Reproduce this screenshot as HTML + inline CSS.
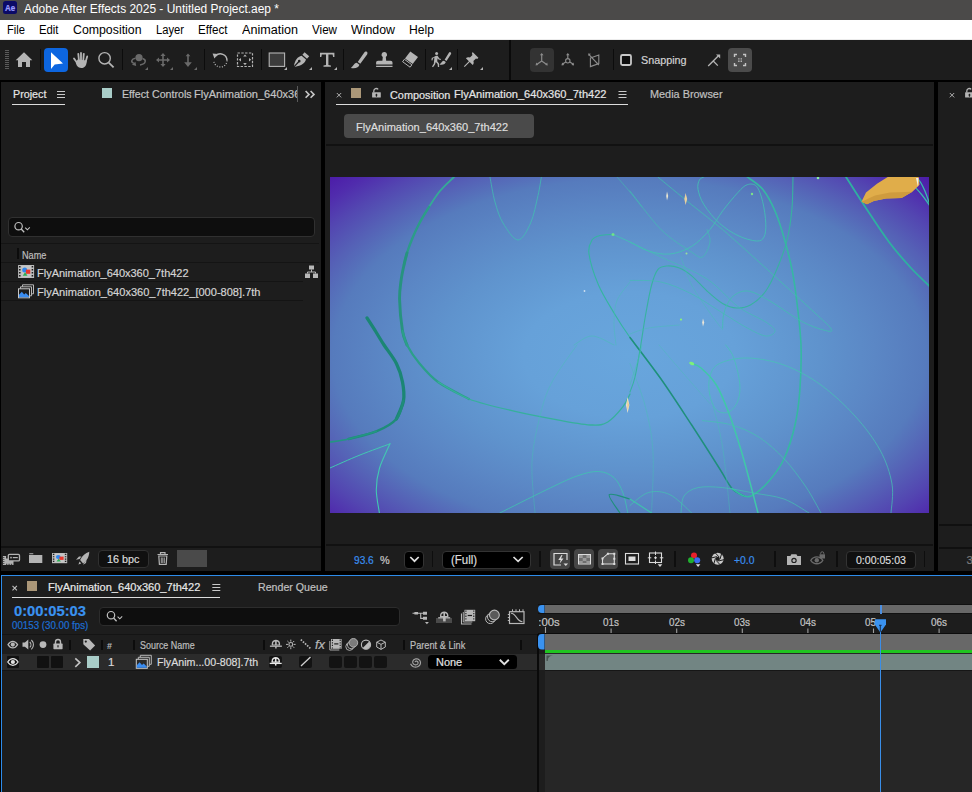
<!DOCTYPE html>
<html lang="en"><head><meta charset="utf-8"><title>Adobe After Effects 2025 - Untitled Project.aep *</title>
<style>
html,body{margin:0;padding:0;background:#000;}
body{width:972px;height:792px;overflow:hidden;position:relative;font-family:"Liberation Sans",sans-serif;}
#app{position:absolute;left:0;top:0;width:972px;height:792px;overflow:hidden;background:#000;}
.b{position:absolute;box-sizing:border-box;}
.t{position:absolute;white-space:nowrap;line-height:1.2;-webkit-text-stroke:0.2px currentColor;transform-origin:0 50%;display:block;}
svg{position:absolute;overflow:visible;}
.p{position:absolute;overflow:hidden;background:#1d1d1d;}
</style></head><body><div id="app">
<header id="titlebar">
<div class="b" style="left:0px;top:0px;width:972px;height:20px;background:#4b4a49;"></div>
<div class="b" style="left:3.3px;top:1px;width:13.5px;height:12.7px;background:#0b0a66;border-radius:2.500px;"></div>
<span class="t" style="left:4.70px;top:2.79px;font-size:8.5px;color:#9c9cff;font-weight:bold;transform:scaleX(0.9387);">Ae</span>
<span class="t" style="left:24.10px;top:2.43px;font-size:12px;color:#ffffff;transform:scaleX(0.9963);-webkit-text-stroke:0;">Adobe After Effects 2025 - Untitled Project.aep *</span>
</header>
<nav id="menubar">
<div class="b" style="left:0px;top:20px;width:972px;height:20px;background:#ffffff;"></div>
<div class="b" style="left:0px;top:39px;width:972px;height:1px;background:#ececec;"></div>
<span class="t" style="left:7.40px;top:22.83px;font-size:12px;color:#000000;transform:scaleX(0.9309);-webkit-text-stroke:0;">File</span>
<span class="t" style="left:39.40px;top:22.83px;font-size:12px;color:#000000;transform:scaleX(0.9430);-webkit-text-stroke:0;">Edit</span>
<span class="t" style="left:73.40px;top:22.83px;font-size:12px;color:#000000;transform:scaleX(1.0270);-webkit-text-stroke:0;">Composition</span>
<span class="t" style="left:156.40px;top:22.83px;font-size:12px;color:#000000;transform:scaleX(0.9328);-webkit-text-stroke:0;">Layer</span>
<span class="t" style="left:198.40px;top:22.83px;font-size:12px;color:#000000;transform:scaleX(0.9684);-webkit-text-stroke:0;">Effect</span>
<span class="t" style="left:242.40px;top:22.83px;font-size:12px;color:#000000;transform:scaleX(1.0494);-webkit-text-stroke:0;">Animation</span>
<span class="t" style="left:312.40px;top:22.83px;font-size:12px;color:#000000;transform:scaleX(0.9692);-webkit-text-stroke:0;">View</span>
<span class="t" style="left:351.40px;top:22.83px;font-size:12px;color:#000000;transform:scaleX(1.0309);-webkit-text-stroke:0;">Window</span>
<span class="t" style="left:409.40px;top:22.83px;font-size:12px;color:#000000;transform:scaleX(1.0129);-webkit-text-stroke:0;">Help</span>
</nav>
<section id="toolbar">
<div class="b" style="left:0px;top:40px;width:972px;height:40px;background:#1d1d1d;"></div>
<div class="b" style="left:5px;top:50px;width:4px;height:20px;background:repeating-linear-gradient(to bottom,#5a5a5a 0,#5a5a5a 1px,transparent 1px,transparent 2px);"></div>
<div class="b" style="left:39.5px;top:49px;width:1.5px;height:21px;background:#0c0c0c;"></div>
<div class="b" style="left:121.5px;top:49px;width:1.5px;height:21px;background:#0c0c0c;"></div>
<div class="b" style="left:203.5px;top:49px;width:1.5px;height:21px;background:#0c0c0c;"></div>
<div class="b" style="left:260.5px;top:49px;width:1.5px;height:21px;background:#0c0c0c;"></div>
<div class="b" style="left:342.5px;top:49px;width:1.5px;height:21px;background:#0c0c0c;"></div>
<div class="b" style="left:424.5px;top:49px;width:1.5px;height:21px;background:#0c0c0c;"></div>
<div class="b" style="left:456.5px;top:49px;width:1.5px;height:21px;background:#0c0c0c;"></div>
<div class="b" style="left:612.5px;top:49px;width:1.5px;height:21px;background:#0c0c0c;"></div>
<div class="b" style="left:509px;top:40px;width:2px;height:40px;background:#0a0a0a;"></div>
<div class="b" style="left:44px;top:48px;width:24px;height:24px;background:#0d66e0;border-radius:4px;"></div>
<div class="b" style="left:530px;top:48px;width:24px;height:24px;background:#333333;border-radius:4px;"></div>
<div class="b" style="left:728px;top:48px;width:24px;height:24px;background:#4b4b4b;border-radius:4px;"></div>
<svg width="972" height="40" viewBox="0 40 972 40" style="left:0;top:40px"><path d="M24 52.3 L32.3 60.3 H30 V67 H26 V62 H22 V67 H18 V60.3 H15.7 Z" fill="#b4b4b4"/><path d="M51 52.3 V69 L54.7 64.6 L63 63.4 Z" fill="#fff"/><path d="M78.300 54 L79 61 M81 53 V61 M83.800 53.800 L83.200 61 M87.200 56.400 L85.600 62 M74 58.400 L77.600 63.600" stroke="#b4b4b4" stroke-width="1.800" stroke-linecap="round" fill="none"/><path d="M77.600 59.600 L86.600 60.400 C87 64.600 85 68 81.200 68 C78 68 76.200 65.600 75.800 62.600 Z" fill="#b4b4b4"/><circle cx="104.6" cy="58.3" r="5.7" fill="none" stroke="#b4b4b4" stroke-width="1.4"/><path d="M108.7 62.6 L113.6 67.4" stroke="#b4b4b4" stroke-width="1.8" fill="none"/><path d="M148 67 V70 H145 Z" fill="#6a6a6a"/><path d="M173 67 V70 H170 Z" fill="#6a6a6a"/><path d="M197 67 V70 H194 Z" fill="#6a6a6a"/><path d="M287 67 V70 H284 Z" fill="#b4b4b4"/><path d="M312 67 V70 H309 Z" fill="#b4b4b4"/><path d="M337 67 V70 H334 Z" fill="#b4b4b4"/><path d="M452 67 V70 H449 Z" fill="#b4b4b4"/><path d="M483 67 V70 H480 Z" fill="#b4b4b4"/><circle cx="139" cy="57.6" r="3.6" fill="#6a6a6a"/><path d="M135.5 58.2 c-4 .6-5.2 3.6-1.6 5.2 M142.5 58.4 c4 1 4 5.6-2.5 6.6" stroke="#6a6a6a" stroke-width="1.5" fill="none"/><path d="M132 64.8 l3.4-3 l.8 4.2z" fill="#6a6a6a"/><path d="M163 53 l2.6 3 h-1.8 v3.2 h3.2 v-1.8 l3 2.6 l-3 2.6 v-1.8 h-3.2 v3.2 h1.8 l-2.6 3 l-2.6-3 h1.8 v-3.2 h-3.2 v1.8 l-3-2.6 l3-2.6 v1.8 h3.2 v-3.2 h-1.8z" fill="#6a6a6a"/><path d="M188 53.6 l2.4 2.6 h-1.6 v6 h3 l-3.8 4.8 l-3.8-4.8 h3 v-6 h-1.6z" fill="#6a6a6a"/><path d="M215.6 56 A6.6 6.6 0 0 1 227 60.4" stroke="#b4b4b4" stroke-width="1.5" fill="none"/><path d="M212.6 53.6 l5.4 .4 l-3.6 4.4z" fill="#b4b4b4"/><path d="M227 60.4 A6.6 6.6 0 0 1 213.8 60.4" stroke="#b4b4b4" stroke-width="1.3" stroke-dasharray="1 1.6" fill="none"/><rect x="237.5" y="53" width="15" height="13.5" fill="none" stroke="#b4b4b4" stroke-width="1.2" stroke-dasharray="2.4 1.4"/><path d="M245 54.4 l1.8 2.2 h-3.6z M245 65.2 l1.8-2.2 h-3.6z M238.8 59.8 l2.2-1.8 v3.6z M251.2 59.8 l-2.2-1.8 v3.6z" fill="#b4b4b4"/><rect x="269.2" y="53" width="15.4" height="13.4" fill="#3c3c3c" stroke="#b4b4b4" stroke-width="1.1"/><path d="M304.6 52.2 l4.6 4 l-2.2 2.6 l-4.6-4z M301.6 55.8 l4.4 3.8 c-1 3.6-4 6-11.4 7.4 l4.4-4.6 a1.3 1.3 0 1 0 -1-.9 l-4 4.6 c1-6.400 3.6-9.200 7.600-10.300z" fill="#b4b4b4"/><path d="M320 52.8 h14.400 v4.2 h-1.300 l-.5-2.500 h-4.200 v10.600 l2.500 .5 v1.200 h-7.400 v-1.200 l2.500-.5 v-10.600 h-4.200 l-.5 2.500 h-1.300z" fill="#b4b4b4"/><path d="M366.4 51.600 c1.200 .6 1.400 1.700 .7 2.800 l-6.800 9.400 l-2.600-1.900 l6.600-9.500 c.6-.9 1.400-1.200 2.100-.8z M356.800 62.800 l2.600 1.900 c-.6 2.700-3.800 4.200-8.600 3.200 c2.600-1.400 2.800-4.600 6-5.100z" fill="#b4b4b4"/><path d="M384.300 52 a2.700 2.700 0 0 1 1.500 5 l.4 3.800 h4.300 c1.300 0 2 .7 2 2 v1.600 h-16.400 v-1.600 c0-1.300 .7-2 2-2 h4.300 l.4-3.800 a2.700 2.700 0 0 1 1.500-5z M376.100 65.700 h16.400 v1.300 h-16.400z" fill="#b4b4b4"/><path d="M410.300 51.400 l7.700 5.600 l-5.300 7.000 l-7.700-5.600z" fill="#b4b4b4"/><path d="M404.400 59.300 l7.500 5.500 l-1.800 2.400 l-7.500-5.500z" fill="none" stroke="#b4b4b4" stroke-width="1"/><circle cx="436.600" cy="53.600" r="1.500" fill="#b4b4b4"/><path d="M433 57.400 l3-1.600 h1.600 l1.800 2.600 l1.600 .6 l-.4 1 l-2-.6 l-1-1.200 l-.4 3 l1.800 2.400 l.2 3.400 h-1.300 l-.3-3 l-1.800-2 l-.8 2.400 l-2 2.800 l-1-.8 l1.800-2.600 l.6-6.200 l-1.400 .8 l-.6 2 l-1-.2 l.4-2.400z" fill="#b4b4b4"/><path d="M450.400 52.200 c.9 .5 1 1.300 .5 2.100 l-4.400 6.800 l-1.900-1.400 l4.300-6.900 c.4-.7 1-.9 1.500-.6z M443.900 60.700 l1.900 1.400 c-.4 2-2.800 3.100-6.400 2.400 c1.900-1 2.100-3.400 4.500-3.800z" fill="#b4b4b4"/><path d="M472.600 52 l5.800 5.800 l-1.200 1.200 l-1.200-.6 l-2.600 2.600 c.6 1.600 .3 3-.7 4 l-3-3 l-5 5 l-.8-.800 l5-5 l-3-3 c1-1 2.400-1.300 4-.7 l2.600-2.600 l-.6-1.200z" fill="#b4b4b4"/><path d="M541.700 54.200 V61 M541.700 61 l-5 3.600 M541.700 61 l5 3.600" stroke="#8c8c8c" stroke-width="1.200" fill="none"/><path d="M541.700 53 l1.800 2.200 h-3.600z M535.600 65.400 l.6-2.800 l2 2.400z M547.800 65.400 l-.6-2.800 l-2 2.400z" fill="#8c8c8c"/><path d="M567.800 54.200 V58.600 M565.800 62 l-4 2.600 M569.800 62 l4 2.600" stroke="#8c8c8c" stroke-width="1.200" fill="none"/><circle cx="567.800" cy="60.800" r="2.200" fill="none" stroke="#8c8c8c" stroke-width="1.100"/><path d="M567.800 53 l1.800 2.200 h-3.600z M561.600 65.400 l.6-2.800 l2 2.400z M574 65.400 l-.6-2.800 l-2 2.400z" fill="#8c8c8c"/><path d="M590.400 58 l8.400-3 v8.600 l-8.400 3z M589 54.600 l9.800 10.400" stroke="#8c8c8c" stroke-width="1.100" fill="none"/><path d="M588 53.400 l3 .4 l-2.400 2.200z" fill="#8c8c8c"/><rect x="621" y="55" width="10" height="10" rx="1.500" fill="#0e0e0e" stroke="#c8c8c8" stroke-width="1.800"/><path d="M708.200 66 l5-5 l4.600 4.600 M713.200 61 l5-5" stroke="#b4b4b4" stroke-width="1.300" fill="none"/><path d="M720.200 54.400 v4.200 l-4.200-4.200z" fill="#b4b4b4"/><path d="M734.500 57 v-2.500 h2.500 M743 54.500 h2.500 v2.500 M745.500 63 v2.500 h-2.500 M737 65.500 h-2.500 v-2.500" stroke="#c4c4c4" stroke-width="1.400" fill="none"/><path d="M738.200 58.200 h1.300 v1.300 h-1.300z M740.600 58.200 h1.300 v1.300 h-1.300z M738.200 60.600 h1.300 v1.300 h-1.300z M740.600 60.600 h1.300 v1.300 h-1.300z" fill="#c4c4c4"/></svg>
<span class="t" style="left:641.30px;top:54.00px;font-size:11.5px;color:#d2d2d2;transform:scaleX(0.9382);">Snapping</span>
</section>
<section id="project-panel">
<div class="b" style="left:1px;top:82px;width:320px;height:489px;background:#1d1d1d;"></div>
<span class="t" style="left:13.40px;top:87.60px;font-size:11.5px;color:#e6e6e6;transform:scaleX(0.9331);">Project</span>
<div class="b" style="left:12px;top:104px;width:53px;height:1.4px;background:#dcdcdc;"></div>
<div class="b" style="left:102px;top:88px;width:10px;height:10px;background:#a9cdc8;"></div>
<div class="b" style="left:120px;top:84px;width:177.400px;height:20px;overflow:hidden;"><span class="t" style="left:1.50px;top:4.30px;font-size:11.5px;color:#c4c4c4;transform:scaleX(0.9254);">Effect Controls</span><span class="t" style="left:74.30px;top:3.80px;font-size:11.5px;color:#c4c4c4;transform:scaleX(0.9618);">FlyAnimation_640x360_7th422</span></div>
<div class="b" style="left:297.4px;top:86px;width:1px;height:15.5px;background:#5a5a5a;"></div>
<div class="b" style="left:8px;top:217px;width:307px;height:19.5px;background:#0e0e0e;border:1px solid #303030;border-radius:4px;"></div>
<div class="b" style="left:1px;top:243px;width:318px;height:1px;background:#141414;"></div>
<div class="b" style="left:16.5px;top:248px;width:2px;height:11px;background:#0c0c0c;"></div>
<span class="t" style="left:22.40px;top:248.73px;font-size:10.5px;color:#bdbdbd;transform:scaleX(0.8711);">Name</span>
<div class="b" style="left:1px;top:262px;width:318px;height:1px;background:#141414;"></div>
<div class="b" style="left:1px;top:281px;width:302px;height:1px;background:#141414;"></div>
<div class="b" style="left:1px;top:300px;width:302px;height:1px;background:#141414;"></div>
<span class="t" style="left:36.80px;top:267.00px;font-size:11.5px;color:#d4d4d4;transform:scaleX(0.9561);">FlyAnimation_640x360_7th422</span>
<span class="t" style="left:36.80px;top:286.00px;font-size:11.5px;color:#d4d4d4;transform:scaleX(0.9603);">FlyAnimation_640x360_7th422_[000-808].7th</span>
<div class="b" style="left:1px;top:546px;width:320px;height:1.5px;background:#111;"></div>
<div class="b" style="left:98.2px;top:550.2px;width:50.6px;height:17.6px;background:#101010;border:1px solid #303030;border-radius:4px;"></div>
<span class="t" style="left:107.30px;top:553.20px;font-size:11.5px;color:#dcdcdc;transform:scaleX(0.9383);">16 bpc</span>
<div class="b" style="left:177px;top:549.7px;width:30px;height:17px;background:#4a4a4a;"></div>
<svg width="321" height="489" viewBox="0 82 321 489" style="left:0;top:82px"><path d="M57 91.500 h8 M57 94.500 h8 M57 97.500 h8" stroke="#c8c8c8" stroke-width="1"/><path d="M305.600 91 l3.400 3.400 l-3.400 3.400 M310.600 91 l3.400 3.400 l-3.400 3.400" stroke="#c8c8c8" stroke-width="1.600" fill="none"/><circle cx="18.600" cy="226.200" r="3.700" fill="none" stroke="#c0c0c0" stroke-width="1.200"/><path d="M21.200 229 l3 3.200" stroke="#c0c0c0" stroke-width="1.300"/><path d="M25.200 227.600 l2.200 2.200 l2.400-2.400" stroke="#c0c0c0" stroke-width="1.100" fill="none"/><g transform="translate(18.1 265) scale(1.000 1.000)"><rect x="0" y="0" width="16" height="13" fill="#bdbdbd"/><path d="M1.700 1 v11.500 M14.300 1 v11.500" stroke="#1d1d1d" stroke-width="1.500" stroke-dasharray="1.500 1.500"/><rect x="3.400" y="1" width="9.200" height="11" fill="#c6c6c6"/><circle cx="6.600" cy="5" r="2.500" fill="#2f86ee"/><rect x="7.800" y="4.600" width="4.400" height="4.200" fill="#e8382e"/><path d="M4.600 10.800 l2.400-3.600 l2.400 3.600z" fill="#2cae54"/></g><g transform="translate(18 284.3)"><path d="M4.500 2.500 v-2 h11 v9 h-2" fill="none" stroke="#b8b8b8" stroke-width="1"/><path d="M2.500 4.500 v-2 h11 v9 h-2" fill="none" stroke="#b8b8b8" stroke-width="1"/><rect x="0.500" y="4.500" width="11" height="9" fill="#1d1d1d" stroke="#c8c8c8" stroke-width="1"/><path d="M1 13 v-2.500 l2.800-3 l2.400 2.600 l1.600-1.400 l3.200 3 v1.300z" fill="#3a8cf0"/></g><path d="M309 265.500 h5 v4 h-5z M305 273.500 h5 v4.500 h-5z M313 273.500 h5 v4.500 h-5z" fill="#b8b8b8"/><path d="M311.500 269.500 v2.500 M307.500 273.500 v-1.500 h8 v1.500" stroke="#b8b8b8" stroke-width="1" fill="none"/><path d="M2.900 556 h3.200 v2.400 h7.400 v6.600 h-10.600z" fill="#b4b4b4"/><path d="M3.800 557 v7" stroke="#1d1d1d" stroke-width="0.900" stroke-dasharray="1 1"/><path d="M6 564.300 h7" stroke="#1d1d1d" stroke-width="0.900" stroke-dasharray="1.400 1"/><rect x="8.300" y="554.300" width="11.200" height="6.600" rx="1.200" fill="#1d1d1d" stroke="#b4b4b4" stroke-width="1.300"/><rect x="10.200" y="556.800" width="1.600" height="1.600" fill="#b4b4b4"/><rect x="12.800" y="557" width="5" height="1.200" fill="#b4b4b4"/><path d="M29.300 553.300 h4 v1 h-4z M29 555 h13.300 v8 h-13.300z" fill="#b4b4b4"/><g transform="translate(52 553) scale(0.950 0.785)"><rect x="0" y="0" width="16" height="13" fill="#bdbdbd"/><path d="M1.700 1 v11.500 M14.300 1 v11.500" stroke="#1d1d1d" stroke-width="1.500" stroke-dasharray="1.500 1.500"/><rect x="3.400" y="1" width="9.200" height="11" fill="#c6c6c6"/><circle cx="6.600" cy="5" r="2.500" fill="#2f86ee"/><rect x="7.800" y="4.600" width="4.400" height="4.200" fill="#e8382e"/><path d="M4.600 10.800 l2.400-3.600 l2.400 3.600z" fill="#2cae54"/></g><path d="M89.300 551.800 c-.2 5.600-2.600 9.200-6.200 11.600 l-3-3.400 c2.200-4.200 5.200-7 9.200-8.200z M79.600 559 l-3.600 .8 l3-3.400 h2.400z M83.600 563.800 l-.4 .9 l2.800-1.800 l.6-3z M79.600 561.600 l1.600 1.800 l-2.800 1z" fill="#b4b4b4"/><path d="M157.500 554.500 h10.500 M160.500 554 v-1.300 h4.500 v1.300" stroke="#b4b4b4" stroke-width="1.200" fill="none"/><path d="M158.800 556 h8 l-.6 8.400 h-6.800z" fill="none" stroke="#b4b4b4" stroke-width="1.200"/><path d="M161.300 557.500 v5.500 M162.800 557.500 v5.500 M164.300 557.500 v5.500" stroke="#b4b4b4" stroke-width="0.900"/></svg>
</section>
<section id="comp-panel">
<div class="b" style="left:325px;top:82px;width:609px;height:489px;background:#1d1d1d;"></div>
<div class="b" style="left:938px;top:82px;width:34px;height:489px;background:#1d1d1d;"></div>
<div class="b" style="left:351px;top:88px;width:10px;height:10px;background:#ab9778;"></div>
<span class="t" style="left:389.70px;top:88.60px;font-size:11.5px;color:#e6e6e6;transform:scaleX(0.9449);">Composition</span>
<span class="t" style="left:453.60px;top:88.20px;font-size:11.5px;color:#e6e6e6;transform:scaleX(0.9618);">FlyAnimation_640x360_7th422</span>
<div class="b" style="left:336px;top:104px;width:291.5px;height:1.4px;background:#dcdcdc;"></div>
<span class="t" style="left:649.60px;top:88.20px;font-size:11.5px;color:#c0c0c0;transform:scaleX(0.9453);">Media Browser</span>
<div class="b" style="left:939px;top:524px;width:33px;height:2px;background:#101010;"></div>
<div class="b" style="left:939px;top:547px;width:33px;height:2px;background:#101010;"></div>
<span class="t" style="left:966.60px;top:553.80px;font-size:11.5px;color:#7a7a7a;">3</span>
<div class="b" style="left:344px;top:114px;width:190px;height:24px;background:#4a4a4a;border-radius:4px;"></div>
<span class="t" style="left:355.80px;top:121.00px;font-size:11.5px;color:#dedede;transform:scaleX(0.9592);">FlyAnimation_640x360_7th422</span>
<div class="b" style="left:326px;top:144px;width:607px;height:2px;background:#111;"></div>
<div class="b" id="viewer" style="left:330px;top:177px;width:599px;height:336px;overflow:hidden;background:radial-gradient(ellipse farthest-corner at 50% 53%,#68a6dd 0%,#66a1d9 25%,#5f93cd 45%,#5b87c5 58%,#567bbd 70%,#5560b6 79%,#5346b1 87%,#502cad 94%,#4c1ca8 100%);">
<svg width="599" height="336" viewBox="0 0 599 336" style="left:0;top:0" fill="none" stroke-linecap="round"><path d="M124.0 0.0C121.7 2.3 114.2 9.0 110.0 14.0C105.8 19.0 102.4 24.7 99.0 30.0C95.6 35.3 91.1 43.3 89.5 46.0" stroke="#35aa96" stroke-width="1.9" opacity="1.0"/>
<path d="M99.0 30.0C97.4 32.7 92.2 40.8 89.5 46.0C86.8 51.2 84.6 56.0 82.5 61.0C80.4 66.0 78.4 71.5 77.0 76.0C75.6 80.5 74.5 86.0 74.0 88.0" stroke="#2c9c88" stroke-width="2.4" opacity="1.0"/>
<path d="M77.0 76.0C76.5 78.0 75.0 83.3 74.0 88.0C73.0 92.7 71.7 98.2 71.0 104.0C70.3 109.8 69.3 114.7 69.6 123.0C69.8 131.3 71.3 146.5 72.5 154.0C73.7 161.5 76.2 165.7 77.0 168.0" stroke="#27937f" stroke-width="2.9" opacity="1.0"/>
<path d="M72.5 154.0C73.2 156.3 74.2 162.6 77.0 168.0C79.8 173.4 84.3 180.3 89.5 186.5C94.7 192.7 99.8 199.1 108.0 205.0C116.2 210.9 133.8 219.2 139.0 222.0" stroke="#2c9f8a" stroke-width="2.2" opacity="1.0"/>
<path d="M108.0 205.0C113.2 207.8 126.2 217.1 139.0 222.0C151.8 226.9 169.6 230.8 185.0 234.4C200.4 238.0 218.6 241.3 231.5 243.6C244.4 245.9 254.6 247.8 262.3 248.0C270.0 248.2 272.7 248.1 277.8 245.0C282.9 241.9 289.3 234.4 293.0 229.7C296.7 225.0 298.8 219.1 300.0 217.0" stroke="#36b09c" stroke-width="1.3" opacity="1.0"/>
<path d="M160.0 0.0C160.8 4.2 162.8 17.3 165.0 25.0C167.2 32.7 169.2 39.7 173.0 46.0C176.8 52.3 183.4 63.0 188.0 63.0C192.6 63.0 197.3 53.4 200.6 46.0C203.9 38.6 206.2 26.2 208.0 18.5C209.8 10.8 210.8 3.1 211.4 0.0" stroke="#40c0b0" stroke-width="0.9" opacity="0.85"/>
<path d="M37.0 141.0C38.5 143.3 43.2 150.5 46.0 155.0C48.8 159.5 50.6 162.8 54.0 168.0C57.4 173.2 63.3 180.3 66.4 186.5C69.5 192.7 71.3 198.8 72.5 205.0C73.7 211.2 74.5 217.4 73.5 223.6C72.5 229.8 67.6 238.9 66.4 242.0" stroke="#1b8674" stroke-width="3.3" opacity="1.0"/>
<path d="M73.5 223.6C72.3 226.7 70.9 236.9 66.4 242.0C61.9 247.1 54.3 251.1 46.3 254.4C38.3 257.7 23.1 260.7 18.5 262.0" stroke="#1f8c79" stroke-width="2.5" opacity="1.0"/>
<path d="M46.3 254.4C41.7 255.7 26.2 260.2 18.5 262.0C10.8 263.8 3.1 264.5 0.0 265.0" stroke="#239682" stroke-width="1.7" opacity="1.0"/>
<path d="M283.0 57.4C280.8 57.6 273.5 57.6 270.0 58.5C266.5 59.4 263.8 59.9 262.0 63.0C260.2 66.1 257.9 69.5 259.0 77.0C260.1 84.5 264.3 98.2 268.5 108.0C272.7 117.8 278.8 127.2 284.0 136.0C289.2 144.8 292.2 149.5 300.0 160.5C307.8 171.5 325.8 195.1 331.0 202.0" stroke="#35b5a0" stroke-width="1.1" opacity="1.0"/>
<path d="M300.0 160.5C305.2 167.4 320.7 187.4 331.0 202.0C341.3 216.6 351.9 233.1 361.7 248.0C371.4 262.9 382.8 280.9 389.5 291.5C396.2 302.1 397.9 306.9 402.0 311.5C406.1 316.1 412.0 317.8 414.0 319.0" stroke="#1f8f7c" stroke-width="1.5" opacity="1.0"/>
<path d="M402.0 311.5C404.0 312.8 410.4 318.0 414.0 319.0C417.6 320.0 419.3 320.2 423.5 317.7C427.7 315.2 433.9 309.9 439.0 304.0C444.1 298.1 449.7 291.3 454.0 282.0C458.3 272.7 462.4 259.3 465.0 248.0C467.6 236.7 468.8 227.3 469.8 214.0C470.8 200.7 471.5 183.1 471.0 168.0C470.5 152.9 468.2 136.1 466.7 123.5C465.2 110.9 464.1 102.9 462.0 92.6C459.9 82.3 457.1 71.5 454.3 61.7C451.5 51.9 448.6 42.2 445.0 34.0C441.4 25.8 437.3 18.0 432.7 12.3C428.1 6.6 419.9 2.1 417.3 0.0" stroke="#36b8a2" stroke-width="1.6" opacity="1.0"/>
<path d="M463.0 0.0C462.8 5.2 462.9 20.7 462.0 31.0C461.1 41.3 459.7 52.0 457.4 61.7C455.1 71.5 451.6 80.8 448.0 89.5C444.4 98.2 440.4 107.6 435.8 114.0C431.2 120.4 425.3 125.2 420.4 128.0C415.5 130.8 411.1 131.2 406.5 131.0C401.9 130.8 397.5 129.3 392.6 126.5C387.7 123.7 382.1 118.6 377.0 114.0C371.9 109.4 366.3 102.6 361.7 98.8C357.1 95.0 353.5 92.6 349.4 91.0C345.3 89.4 340.6 88.7 337.0 89.0C333.4 89.3 330.4 89.4 327.8 92.6C325.2 95.8 323.7 100.3 321.6 108.0C319.5 115.7 317.2 129.0 315.4 139.0C313.6 149.0 312.5 157.8 310.8 168.0C309.1 178.2 306.8 192.2 305.0 200.0C303.2 207.8 300.8 212.5 300.0 215.0" stroke="#38b2a0" stroke-width="1.1" opacity="1.0"/>
<path d="M283.0 57.4C285.8 58.7 294.1 62.2 300.0 65.0C305.9 67.8 311.8 72.0 318.5 74.0C325.2 76.0 332.8 77.8 340.0 77.0C347.2 76.2 355.0 73.5 361.7 69.4C368.4 65.3 374.9 58.4 380.0 52.5C385.1 46.6 387.9 40.2 392.6 34.0C397.3 27.8 403.9 19.8 408.0 15.4C412.1 11.0 414.2 8.7 417.3 7.7C420.4 6.7 423.9 6.5 426.5 9.3C429.1 12.1 431.1 18.5 432.7 24.7C434.2 30.9 435.6 40.4 435.8 46.3C436.0 52.2 435.6 57.0 434.0 60.0C432.4 63.0 430.8 64.2 426.5 64.0C422.2 63.8 414.2 61.6 408.0 58.6C401.8 55.6 395.2 51.4 389.5 46.3C383.8 41.2 377.6 33.5 374.0 27.8C370.4 22.1 368.8 16.4 368.0 12.3C367.2 8.2 368.4 5.1 369.4 3.0C370.4 0.9 373.2 0.5 374.0 0.0" stroke="#42c4b2" stroke-width="0.9" opacity="0.9"/>
<path d="M327.8 0.0C333.4 4.6 350.9 19.1 361.7 27.8C372.5 36.5 382.3 43.8 392.6 52.5C402.9 61.2 413.2 70.8 423.5 80.0C433.8 89.2 444.1 98.7 454.3 108.0C464.6 117.3 477.3 128.8 485.0 136.0C492.7 143.2 498.5 148.0 500.6 151.0C502.7 154.0 502.1 155.0 497.5 154.0C492.9 153.0 482.6 150.1 472.8 145.0C463.1 139.9 448.2 128.7 439.0 123.5C429.8 118.3 423.5 114.5 417.3 114.0C411.1 113.5 405.7 116.7 401.8 120.4C397.9 124.1 395.5 130.9 394.0 136.0C392.5 141.1 392.8 148.5 392.6 151.0" stroke="#40c0ae" stroke-width="0.9" opacity="0.85"/>
<path d="M300.0 14.0C305.2 20.4 321.0 42.5 331.0 52.5C341.0 62.5 353.1 69.4 360.0 74.0C366.9 78.6 369.2 81.5 372.5 80.0C375.8 78.5 379.2 69.6 380.0 65.0C380.8 60.4 377.5 54.6 377.0 52.5" stroke="#40c0ae" stroke-width="0.8" opacity="0.8"/>
<path d="M300.0 65.0C305.2 67.5 318.2 73.8 331.0 80.0C343.8 86.2 364.2 93.7 377.0 102.0C389.8 110.3 398.2 122.4 408.0 129.6C417.8 136.8 429.6 140.9 435.8 145.0C442.0 149.1 445.0 151.7 445.0 154.0C445.0 156.3 440.4 159.5 435.8 159.0C431.2 158.5 424.5 154.8 417.3 151.0C410.1 147.2 401.9 141.7 392.6 136.0C383.3 130.3 372.0 122.2 361.7 117.0C351.4 111.8 341.3 107.3 331.0 105.0C320.7 102.7 305.2 103.7 300.0 103.4" stroke="#40c0ae" stroke-width="0.8" opacity="0.8"/>
<path d="M351.0 80.0C352.8 84.7 356.9 98.7 361.7 108.0C366.5 117.3 374.9 128.5 380.0 136.0C385.1 143.5 390.5 150.0 392.6 152.8" stroke="#44c2b0" stroke-width="0.7" opacity="0.6"/>
<path d="M300.0 157.0C303.1 156.0 310.3 152.5 318.5 151.0C326.7 149.5 344.2 148.5 349.4 148.0" stroke="#44c2b0" stroke-width="0.7" opacity="0.6"/>
<path d="M516.0 0.0C519.1 4.8 527.4 18.2 534.6 29.0C541.8 39.8 551.3 54.7 559.0 65.0C566.7 75.3 574.2 83.6 581.0 91.0C587.8 98.4 596.8 106.5 600.0 109.6" stroke="#2fb0a0" stroke-width="1.8" opacity="1.0"/>
<path d="M559.0 6.0C561.7 5.5 570.3 3.8 575.0 3.0C579.7 2.2 583.8 0.0 587.0 1.5C590.2 3.0 591.8 7.6 594.0 12.0C596.2 16.4 599.0 25.3 600.0 28.0" stroke="#38bcae" stroke-width="1.3" opacity="1.0"/>
<path d="M584.0 9.0C585.3 10.5 589.3 14.7 592.0 18.0C594.7 21.3 598.7 27.2 600.0 29.0" stroke="#38bcae" stroke-width="1.2" opacity="1.0"/>
<path d="M287.0 0.0C289.2 2.5 295.8 10.0 300.0 15.0C304.2 20.0 310.0 27.5 312.0 30.0" stroke="#40c0ae" stroke-width="0.8" opacity="0.7"/>
<path d="M300.0 105.0C297.8 108.1 289.7 116.8 287.0 123.5C284.3 130.2 284.2 137.6 284.0 145.0C283.8 152.4 285.7 164.2 286.0 168.0" stroke="#44c2b0" stroke-width="0.7" opacity="0.6"/>
<path d="M244.0 168.0C247.0 166.5 255.3 159.0 262.0 159.0C268.7 159.0 280.3 166.5 284.0 168.0" stroke="#44c2b0" stroke-width="0.7" opacity="0.7"/>
<path d="M0.0 291.0C5.0 288.8 20.0 282.0 30.0 278.0C40.0 274.0 55.0 268.7 60.0 266.8" stroke="#42c8b2" stroke-width="1.0" opacity="1.0"/>
<path d="M60.0 266.8C58.2 270.9 51.7 283.8 49.4 291.5C47.1 299.2 46.3 305.6 46.3 313.0C46.3 320.4 48.9 332.2 49.4 336.0" stroke="#42c8b2" stroke-width="1.1" opacity="1.0"/>
<path d="M247.0 168.0C242.8 174.2 228.2 193.2 222.0 205.0C215.8 216.8 213.3 225.7 210.0 239.0C206.7 252.3 202.8 268.8 202.0 285.0C201.2 301.2 204.5 327.5 205.0 336.0" stroke="#44c2b0" stroke-width="0.7" opacity="0.6"/>
<path d="M169.8 336.0C177.5 332.2 203.1 319.2 216.0 313.0C228.9 306.8 238.2 302.1 247.0 299.0C255.8 295.9 262.3 294.2 268.5 294.5C274.7 294.8 279.9 297.1 284.0 300.7C288.1 304.3 290.7 310.1 293.0 316.0C295.3 321.9 297.0 332.7 297.8 336.0" stroke="#40c4b0" stroke-width="0.9" opacity="0.9"/>
<path d="M290.0 336.0C288.2 332.9 277.6 320.0 279.3 317.7C281.0 315.4 296.6 321.3 300.0 322.0" stroke="#1f8f7c" stroke-width="1.2" opacity="1.0"/>
<path d="M361.7 186.5C363.2 187.2 366.9 187.4 371.0 191.0C375.1 194.6 381.8 200.5 386.4 208.0C391.0 215.5 394.7 225.2 398.8 236.0C402.9 246.8 407.1 260.2 411.0 273.0C414.9 285.8 419.2 302.5 422.0 313.0C424.8 323.5 427.0 332.2 428.0 336.0" stroke="#40c8a8" stroke-width="1.5" opacity="1.0"/>
<path d="M395.7 168.0C397.0 170.0 401.1 173.8 403.4 180.0C405.7 186.2 408.8 197.8 409.6 205.0C410.4 212.2 409.8 218.5 408.0 223.5C406.2 228.5 402.4 233.4 398.8 235.0C395.2 236.6 389.6 236.0 386.4 233.0C383.2 230.0 380.7 222.7 379.6 217.0C378.5 211.3 378.4 204.1 380.0 199.0C381.6 193.9 383.3 189.5 389.5 186.5C395.7 183.5 406.2 180.8 417.0 181.0C427.8 181.2 441.7 183.5 454.0 188.0C466.3 192.5 479.2 199.5 491.0 208.0C502.8 216.5 515.2 228.2 525.0 239.0C534.8 249.8 543.8 261.7 550.0 273.0C556.2 284.3 560.2 296.5 562.0 307.0C563.8 317.5 561.2 331.2 561.0 336.0" stroke="#46c4b2" stroke-width="0.9" opacity="0.8"/>
<path d="M372.5 243.6C377.4 244.3 392.5 245.2 402.0 248.0C411.5 250.8 420.9 254.9 429.6 260.6C438.3 266.3 446.6 273.8 454.3 282.0C462.0 290.2 469.9 301.0 476.0 310.0C482.1 319.0 488.5 331.7 491.0 336.0" stroke="#44c2b0" stroke-width="0.9" opacity="0.8"/>
<path d="M351.0 336.0C351.5 333.2 351.2 323.2 354.0 319.0C356.8 314.8 361.6 312.0 368.0 310.6C374.4 309.2 383.4 309.7 392.6 310.6C401.9 311.5 413.3 314.1 423.5 316.0C433.7 317.9 444.8 318.7 454.0 322.0C463.2 325.3 474.8 333.7 479.0 336.0" stroke="#44c2b0" stroke-width="0.9" opacity="0.8"/>
<path d="M300.0 328.5C303.1 326.3 311.8 317.3 318.5 315.5C325.2 313.7 332.8 314.3 340.0 317.7C347.2 321.1 358.1 332.9 361.7 336.0" stroke="#44c2b0" stroke-width="0.9" opacity="0.8"/>
<path d="M300.0 322.0C303.6 324.3 318.0 333.7 321.6 336.0" stroke="#40c0ae" stroke-width="1.2" opacity="1.0"/>
<path d="M300.0 208.0C301.5 203.3 307.0 186.7 309.0 180.0C311.0 173.3 311.5 170.0 312.0 168.0" stroke="#44c2b0" stroke-width="0.8" opacity="0.7"/>
<path d="M300.0 186.5C302.6 193.7 311.6 214.8 315.4 229.7C319.2 244.6 322.0 258.3 323.0 276.0C324.0 293.7 321.8 326.0 321.6 336.0" stroke="#44c2b0" stroke-width="0.7" opacity="0.6"/>
<path d="M383.3 229.7C384.9 236.4 389.8 252.3 392.6 270.0C395.4 287.7 398.8 325.0 400.0 336.0" stroke="#44c2b0" stroke-width="0.7" opacity="0.6"/>
<path d="M329.0 168.0C333.4 173.2 347.1 189.2 355.6 199.0C364.1 208.8 375.9 222.0 380.0 226.6" stroke="#44c2b0" stroke-width="0.7" opacity="0.5"/>
<path d="M531.500 24.700 L536 15.400 L547 6.800 L557.700 0 L588.600 0 L589.500 7.700 L582.400 14.800 L571.600 21 L556 21.600 L543.800 24 L537 27.200Z" fill="#e0ad4a"/>
<path d="M531.500 24.700 L545 18.500 L560 15.500 L582.400 14.800 L571.600 21 L556 21.600 L543.800 24 L537 27.200Z" fill="#cf9b3e"/>
<path d="M586 1 l2.500 0 l-.5 9z" fill="#f2f2ea"/>
<circle cx="283" cy="57.400" r="1.500" fill="#6fe08a"/><ellipse cx="361.700" cy="186.500" rx="2.600" ry="1.600" fill="#7cf07a" transform="rotate(20 361.700 186.500)"/>
<circle cx="351" cy="142.600" r="1.100" fill="#8af07a"/><circle cx="422" cy="17" r="1.200" fill="#7ce08a"/><circle cx="356.500" cy="76.500" r="1" fill="#9ae09a"/>
<circle cx="488" cy="1" r="1.300" fill="#8af0a0"/>
<path d="M337 14.500 l1.200 4.500 l-1.200 4.500 l-.8-4.500z" fill="#e8e4d0"/><path d="M355.600 16 l1.600 6 l-1.600 6 l-1.300-6z" fill="#e8d0a0"/>
<path d="M373 141.500 l1.200 4 l-1.200 4 l-.8-4z" fill="#ece6d8"/><path d="M297.600 220 l1.800 8 l-1.800 8 l-1.600-8z" fill="#f0e6c8"/><path d="M297.600 222 l1 6 l-1 6z" fill="#e0b060"/>
<circle cx="254.500" cy="114" r="0.900" fill="#cfe0f0"/>
</svg>
</div>
<div class="b" style="left:326px;top:544px;width:607px;height:2px;background:#111;"></div>
<span class="t" style="left:353.90px;top:554.00px;font-size:11.5px;color:#3a8ff0;transform:scaleX(0.8801);">93.6</span>
<span class="t" style="left:379.60px;top:554.00px;font-size:11.5px;color:#c8c8c8;transform:scaleX(0.9486);">%</span>
<div class="b" style="left:404px;top:550.5px;width:19.5px;height:18px;background:#000;border:1px solid #333;border-radius:4px;"></div>
<div class="b" style="left:431.8px;top:551px;width:1.6px;height:16px;background:#0e0e0e;"></div>
<div class="b" style="left:539.3px;top:551px;width:1.6px;height:16px;background:#0e0e0e;"></div>
<div class="b" style="left:674.3px;top:551px;width:1.6px;height:16px;background:#0e0e0e;"></div>
<div class="b" style="left:774.3px;top:551px;width:1.6px;height:16px;background:#0e0e0e;"></div>
<div class="b" style="left:836.3px;top:551px;width:1.6px;height:16px;background:#0e0e0e;"></div>
<div class="b" style="left:923.8px;top:551px;width:1.6px;height:16px;background:#0e0e0e;"></div>
<div class="b" style="left:442.2px;top:550.5px;width:89.3px;height:18px;background:#000;border:1px solid #333;border-radius:4px;"></div>
<span class="t" style="left:451.10px;top:552.73px;font-size:12px;color:#dcdcdc;transform:scaleX(0.9550);">(Full)</span>
<div class="b" style="left:550px;top:549px;width:20px;height:20px;background:#454545;border-radius:4px;"></div>
<div class="b" style="left:574px;top:549px;width:20px;height:20px;background:#454545;border-radius:4px;"></div>
<div class="b" style="left:598px;top:549px;width:20px;height:20px;background:#454545;border-radius:4px;"></div>
<span class="t" style="left:734.30px;top:554.00px;font-size:11.5px;color:#3a8ff0;transform:scaleX(0.8986);">+0.0</span>
<div class="b" style="left:846.4px;top:550.5px;width:69.8px;height:18px;background:#101010;border:1px solid #333;border-radius:4px;"></div>
<span class="t" style="left:856.00px;top:554.00px;font-size:11.5px;color:#dcdcdc;transform:scaleX(0.9180);">0:00:05:03</span>
<svg width="647" height="489" viewBox="325 82 647 489" style="left:325px;top:82px"><path d="M336.8 93.0 l4.400 4.400 M341.2 93.0 l-4.400 4.400" stroke="#b0b0b0" stroke-width="1" fill="none"/><g transform="translate(371.6 87.9)"><path d="M2.200 4.600 v-1.400 a2.500 2.500 0 0 1 4.400-1.700" fill="none" stroke="#b4b4b4" stroke-width="1.300"/><rect x="0.500" y="4.300" width="8.700" height="5.300" rx="0.500" fill="#b4b4b4"/><path d="M4.850 5.600 l1 1.200 l-.6 2 h-.8 l-.6-2z" fill="#1d1d1d"/></g><path d="M618.500 91.500 h8 M618.500 94.500 h8 M618.500 97.500 h8" stroke="#c8c8c8" stroke-width="1"/><path d="M949.8 93.0 l4.400 4.400 M954.2 93.0 l-4.400 4.400" stroke="#b0b0b0" stroke-width="1" fill="none"/><g transform="translate(964.6 87.9)"><path d="M2.200 4.600 v-1.400 a2.500 2.500 0 0 1 4.400-1.700" fill="none" stroke="#b4b4b4" stroke-width="1.300"/><rect x="0.500" y="4.300" width="8.700" height="5.300" rx="0.500" fill="#b4b4b4"/><path d="M4.850 5.600 l1 1.200 l-.6 2 h-.8 l-.6-2z" fill="#1d1d1d"/></g><path d="M410.300 557 l4.200 4.200 l4.200-4.200" stroke="#e0e0e0" stroke-width="1.700" fill="none"/><path d="M513.500 557 l4.600 4.400 l4.600-4.400" stroke="#e0e0e0" stroke-width="1.700" fill="none"/><path d="M567 560 v-6.500 h-13 v11.500 h7" fill="none" stroke="#dcdcdc" stroke-width="1.200"/><path d="M561.500 555 l-3.200 5 h2.400 l-1.200 3.800 l4-5.200 h-2.500 l1.500-3.600z" fill="#dcdcdc"/><path d="M563.500 563.500 h4.600 l-2.300 2.600z" fill="#dcdcdc"/><rect x="578.500" y="554.500" width="12" height="9.500" fill="#6e6e6e" stroke="#dcdcdc" stroke-width="1"/><path d="M579 555 h3.700 v3 h-3.700z M586.400 555 h3.600 v3 h-3.600z M582.700 558 h3.700 v3 h-3.700z M579 561 h3.700 v2.500 h-3.700z M586.400 561 h3.600 v2.500 h-3.600z" fill="#9a9a9a"/><path d="M602.500 564 v-5.600 l5.400-4.700 h6.400 v10.300z" fill="#5a5a5a" stroke="#dcdcdc" stroke-width="1.100"/><path d="M601.500 563 h2 v2 h-2z M601.500 557.400 h2 v2 h-2z M606.900 552.700 h2 v2 h-2z M613.300 552.700 h2 v2 h-2z M613.300 563 h2 v2 h-2z M613.300 557.800 h2 v2 h-2z" fill="#dcdcdc"/><rect x="625.500" y="553.500" width="13" height="10.500" fill="none" stroke="#dcdcdc" stroke-width="1.100"/><rect x="628.500" y="556.500" width="7" height="4.500" fill="#dcdcdc"/><rect x="649.500" y="553" width="12" height="9.500" fill="none" stroke="#dcdcdc" stroke-width="1.100"/><path d="M655.500 551.500 v3.500 M655.500 560.500 v3.500 M647.800 557.800 h3.500 M659.800 557.800 h3.500 M654 557.800 h3 M655.500 556.300 v3" stroke="#dcdcdc" stroke-width="1"/><path d="M657.700 564.300 h4.600 l-2.300 2.600z" fill="#dcdcdc"/><circle cx="694" cy="555.500" r="3" fill="#e8202a"/><circle cx="691" cy="560.300" r="3" fill="#20b030"/><circle cx="697.200" cy="560.300" r="3" fill="#3a6cf0"/><path d="M695.800 564.300 h4.600 l-2.300 2.600z" fill="#dcdcdc"/><circle cx="717.700" cy="558.800" r="6" fill="#c8c8c8"/><path d="M719.97 559.20 L718.49 560.96 L716.22 560.56 L715.43 558.40 L716.91 556.64 L719.18 557.04z" fill="#1d1d1d"/><path d="M719.97 559.20 L721.58 553.84" stroke="#1d1d1d" stroke-width="1"/><path d="M718.49 560.96 L723.94 559.68" stroke="#1d1d1d" stroke-width="1"/><path d="M716.22 560.56 L720.06 564.64" stroke="#1d1d1d" stroke-width="1"/><path d="M715.43 558.40 L713.82 563.76" stroke="#1d1d1d" stroke-width="1"/><path d="M716.91 556.64 L711.46 557.92" stroke="#1d1d1d" stroke-width="1"/><path d="M719.18 557.04 L715.34 552.96" stroke="#1d1d1d" stroke-width="1"/><path d="M787 556 h3.400 l1-1.800 h5 l1 1.800 h3.600 v9 h-14z" fill="#b4b4b4"/><circle cx="794" cy="560.400" r="2.700" fill="#1d1d1d"/><circle cx="794" cy="560.400" r="1.500" fill="#b4b4b4"/><path d="M810.800 560.300 c3-4.600 9-4.600 12 0 c-3 4.600-9 4.600-12 0z" fill="none" stroke="#6a6a6a" stroke-width="1.300"/><circle cx="816.800" cy="560.300" r="2.200" fill="#6a6a6a"/><rect x="819.500" y="554.300" width="5.500" height="4.200" fill="#6a6a6a"/><path d="M820.700 554.300 v-1 a1.550 1.550 0 0 1 3.100 0 v1" fill="none" stroke="#6a6a6a" stroke-width="1"/></svg>
</section>
<section id="timeline-panel">
<div class="b" style="left:1px;top:575px;width:971px;height:217px;background:#1d1d1d;border:1px solid #2d8ceb;border-right:none;border-bottom:none;"></div>
<div class="b" style="left:27px;top:581px;width:10px;height:10px;background:#ab9778;"></div>
<span class="t" style="left:47.80px;top:581.00px;font-size:11.5px;color:#e8e8e8;transform:scaleX(0.9605);">FlyAnimation_640x360_7th422</span>
<div class="b" style="left:12px;top:597px;width:208px;height:1.4px;background:#dcdcdc;"></div>
<span class="t" style="left:258.30px;top:581.00px;font-size:11.5px;color:#c0c0c0;transform:scaleX(0.9239);">Render Queue</span>
<span class="t" style="left:14.30px;top:603.76px;font-size:13.8px;color:#3a92f0;font-weight:bold;transform:scaleX(1.0664);">0:00:05:03</span>
<span class="t" style="left:12.10px;top:620.40px;font-size:10px;color:#1c6fd4;transform:scaleX(0.9733);">00153 (30.00 fps)</span>
<div class="b" style="left:99.3px;top:606.5px;width:300.7px;height:19px;background:#0e0e0e;border:1px solid #2c2c2c;border-radius:4px;"></div>
<div class="b" style="left:436.3px;top:618px;width:15.7px;height:5px;background:#4a4a4a;"></div>
<div class="b" style="left:2px;top:634px;width:535px;height:1px;background:#141414;"></div>
<div class="b" style="left:68.5px;top:639.5px;width:2px;height:10px;background:#0c0c0c;"></div>
<div class="b" style="left:100.5px;top:639.5px;width:2px;height:10px;background:#0c0c0c;"></div>
<div class="b" style="left:133.4px;top:639.5px;width:2px;height:10px;background:#0c0c0c;"></div>
<div class="b" style="left:263.2px;top:639.5px;width:2px;height:10px;background:#0c0c0c;"></div>
<div class="b" style="left:403px;top:639.5px;width:2px;height:10px;background:#0c0c0c;"></div>
<div class="b" style="left:520px;top:639.5px;width:2px;height:10px;background:#0c0c0c;"></div>
<span class="t" style="left:107.40px;top:640.36px;font-size:9.5px;color:#bdbdbd;transform:scaleX(0.8895);font-style:italic;">#</span>
<span class="t" style="left:140.10px;top:639.23px;font-size:10.5px;color:#bdbdbd;transform:scaleX(0.8521);">Source Name</span>
<span class="t" style="left:410.30px;top:639.43px;font-size:10.5px;color:#bdbdbd;transform:scaleX(0.8773);">Parent &amp; Link</span>
<span class="t" style="left:315.30px;top:636.90px;font-size:13px;color:#b8b8b8;transform:scaleX(0.9890);font-style:italic;">fx</span>
<div class="b" style="left:2px;top:653.8px;width:535px;height:16.2px;background:#2b2b2b;"></div>
<div class="b" style="left:2px;top:670px;width:535px;height:1px;background:#141414;"></div>
<div class="b" style="left:7px;top:656px;width:12px;height:12px;background:#111111;border-radius:1px;"></div>
<div class="b" style="left:37px;top:656px;width:12px;height:12px;background:#111111;border-radius:1px;"></div>
<div class="b" style="left:51px;top:656px;width:12px;height:12px;background:#111111;border-radius:1px;"></div>
<div class="b" style="left:87px;top:656px;width:12px;height:12px;background:#a9cdc8;"></div>
<span class="t" style="left:107.90px;top:656.00px;font-size:11.5px;color:#d8d8d8;">1</span>
<span class="t" style="left:156.60px;top:656.00px;font-size:11.5px;color:#dcdcdc;transform:scaleX(0.9259);">FlyAnim...00-808].7th</span>
<div class="b" style="left:269.4px;top:655.5px;width:12.5px;height:12px;background:#131313;border-radius:2px;"></div>
<div class="b" style="left:299.4px;top:655.5px;width:12.5px;height:12px;background:#131313;border-radius:2px;"></div>
<div class="b" style="left:329.3px;top:655.5px;width:12.5px;height:12px;background:#131313;border-radius:2px;"></div>
<div class="b" style="left:344.2px;top:655.5px;width:12.5px;height:12px;background:#131313;border-radius:2px;"></div>
<div class="b" style="left:359.1px;top:655.5px;width:12.5px;height:12px;background:#131313;border-radius:2px;"></div>
<div class="b" style="left:374.1px;top:655.5px;width:12.5px;height:12px;background:#131313;border-radius:2px;"></div>
<div class="b" style="left:428px;top:655.2px;width:89px;height:13.5px;background:#000;border-radius:3.500px;"></div>
<span class="t" style="left:436.40px;top:656.00px;font-size:11.5px;color:#e0e0e0;transform:scaleX(0.9493);">None</span>
<div class="b" style="left:537px;top:634px;width:1.5px;height:158px;background:#0a0a0a;"></div>
<div class="b" style="left:538.5px;top:653.8px;width:6.5px;height:16.2px;background:#2b2b2b;"></div>
<div class="b" style="left:545px;top:634px;width:427px;height:158px;background:#262626;"></div>
<div class="b" style="left:545px;top:605px;width:427px;height:8px;background:#686868;"></div>
<div class="b" style="left:545px;top:634px;width:427px;height:15.5px;background:#686868;"></div>
<div class="b" style="left:538px;top:613px;width:434px;height:21px;background:#1d1d1d;"></div>
<div class="b" style="left:538px;top:633px;width:434px;height:1.2px;background:#0c0c0c;"></div>
<div class="b" style="left:545px;top:650px;width:427px;height:3.2px;background:#1fc420;"></div>
<div class="b" style="left:545px;top:654px;width:427px;height:16px;background:#728583;"></div>
<div class="b" style="left:545px;top:670px;width:427px;height:1px;background:#161616;"></div>
<div class="b" style="left:538.500px;top:614px;width:30px;height:16px;overflow:hidden;"><span class="t" style="left:-6.50px;top:1.53px;font-size:10.5px;color:#c4c4c4;transform:scaleX(1.0784);">0:00s</span></div>
<span class="t" style="left:602.90px;top:615.63px;font-size:10.5px;color:#c4c4c4;transform:scaleX(0.9451);">01s</span>
<span class="t" style="left:668.50px;top:615.63px;font-size:10.5px;color:#c4c4c4;transform:scaleX(0.9451);">02s</span>
<span class="t" style="left:734.10px;top:615.63px;font-size:10.5px;color:#c4c4c4;transform:scaleX(0.9451);">03s</span>
<span class="t" style="left:799.70px;top:615.63px;font-size:10.5px;color:#c4c4c4;transform:scaleX(0.9451);">04s</span>
<span class="t" style="left:865.30px;top:615.63px;font-size:10.5px;color:#c4c4c4;transform:scaleX(0.9451);">05s</span>
<span class="t" style="left:930.90px;top:615.63px;font-size:10.5px;color:#c4c4c4;transform:scaleX(0.9451);">06s</span>
<div class="b" style="left:538px;top:604px;width:434px;height:1px;background:#111111;"></div>
<div class="b" style="left:538px;top:613px;width:434px;height:1px;background:#111111;"></div>
<div class="b" style="left:879.8px;top:605px;width:1.8px;height:8.5px;background:#4d8fe0;"></div>
<div class="b" style="left:879.5px;top:630px;width:1.2px;height:162px;background:#3a8ee8;"></div>
<svg width="972" height="217" viewBox="0 575 972 217" style="left:0;top:575px"><path d="M12.500 585.900 l4.400 4.400 M16.900 585.900 l-4.400 4.400" stroke="#c0c0c0" stroke-width="1.100" fill="none"/><path d="M212.300 584.500 h8 M212.300 587.500 h8 M212.300 590.500 h8" stroke="#c8c8c8" stroke-width="1"/><circle cx="111" cy="615.200" r="3.700" fill="none" stroke="#c0c0c0" stroke-width="1.200"/><path d="M113.600 618 l3 3.200" stroke="#c0c0c0" stroke-width="1.300"/><path d="M117.600 616.600 l2.200 2.200 l2.400-2.400" stroke="#c0c0c0" stroke-width="1.100" fill="none"/><path d="M412.500 613.200 h11 M420.700 613.200 v5.200 h3" stroke="#b8b8b8" stroke-width="1.100" fill="none"/><path d="M414.400 611.900 h3.600 v2.700 h-3.600z M423 611.700 h4 v3.100 h-4z M423 616.800 h4 v3 h-4z" fill="#b8b8b8"/><path d="M424.900 622 h4 l-2 2.200z" fill="#b8b8b8"/><g transform="translate(438.2 610.8)"><path d="M1.800 6.400 v-1.600 c0-5.600 8.400-5.600 8.400 0 v1.600z" fill="#b8b8b8"/><path d="M3.200 5.200 v-.8 c0-.9 .8-1.700 2-2 v2.800z M8.800 5.200 v-.8 c0-.9 -.8-1.700 -2-2 v2.800z" fill="#1d1d1d"/><path d="M0 7 h12" stroke="#b8b8b8" stroke-width="1.300"/><path d="M6 7 v2.200" stroke="#b8b8b8" stroke-width="1.500"/></g><path d="M444.400 617 v4.400" stroke="#b8b8b8" stroke-width="2.600"/><path d="M461.500 613.500 v10.500 h10" stroke="#b8b8b8" stroke-width="1.100" fill="none"/><path d="M463.300 612 v10 h9" stroke="#b8b8b8" stroke-width="0.900" fill="none"/><rect x="464.5" y="609.8" width="10.7" height="11.4" fill="#b8b8b8"/><path d="M465.9 610.4 v10.4 M473.8 610.4 v10.4" stroke="#1d1d1d" stroke-width="1.100" stroke-dasharray="1.300 1.300"/><rect x="467.7" y="614.9" width="4.299999999999999" height="1.200" fill="#1d1d1d"/><circle cx="490.300" cy="618.900" r="4.700" fill="#1d1d1d" stroke="#b8b8b8" stroke-width="1"/><circle cx="492.200" cy="617" r="4.700" fill="#1d1d1d" stroke="#b8b8b8" stroke-width="1"/><circle cx="494.400" cy="615" r="4.900" fill="#5a5a5a" stroke="#b8b8b8" stroke-width="1.100"/><rect x="509.500" y="611.700" width="14.500" height="11.800" fill="none" stroke="#b8b8b8" stroke-width="1.200"/><path d="M512.500 609.300 v2.400 M516 609.300 v2.400 M519.500 609.300 v2.400 M523 609.300 v2.400 M507.800 614.500 h1.700 M507.800 617.500 h1.700 M507.800 620.500 h1.700" stroke="#b8b8b8" stroke-width="1"/><path d="M511 613.300 c5.500 0 5.500 8.400 11.500 8.400" stroke="#b8b8b8" stroke-width="1.100" fill="none"/><path d="M8.0 644.6 c2.64-4.400 6.96-4.400 9.6 0 c-2.64 4.400-6.96 4.400-9.6 0z" fill="none" stroke="#b8b8b8" stroke-width="1.200"/><circle cx="12.8" cy="644.6" r="2.100" fill="#b8b8b8"/><path d="M22.500 642.500 h2.400 l3.400-2.900 v10 l-3.400-2.900 h-2.400z" fill="#b8b8b8"/><path d="M29.800 642 c1.500 1.500 1.500 3.900 0 5.400 M31.400 640 c2.700 2.700 2.700 6.700 0 9.400" stroke="#b8b8b8" stroke-width="1.100" fill="none"/><circle cx="43" cy="644.600" r="3.400" fill="#b8b8b8"/><path d="M55.500 644 v-2 a2.500 2.500 0 0 1 5 0 v2" fill="none" stroke="#b8b8b8" stroke-width="1.400"/><rect x="53.400" y="643.600" width="9.200" height="5.600" rx="0.600" fill="#b8b8b8"/><rect x="57.400" y="645.200" width="1.200" height="2.200" fill="#1d1d1d"/><path d="M83.300 639 h5.600 l6.200 6.600 l-5 5 l-6.800-6.400z" fill="#b8b8b8"/><circle cx="85.800" cy="641.600" r="1.100" fill="#1d1d1d"/><g transform="translate(269.9 639.2)"><path d="M1.800 6.400 v-1.600 c0-5.600 8.400-5.600 8.400 0 v1.600z" fill="#b8b8b8"/><path d="M3.200 5.200 v-.8 c0-.9 .8-1.700 2-2 v2.800z M8.800 5.200 v-.8 c0-.9 -.8-1.700 -2-2 v2.800z" fill="#1d1d1d"/><path d="M0 7 h12" stroke="#b8b8b8" stroke-width="1.300"/><path d="M6 7 v2.200" stroke="#b8b8b8" stroke-width="1.500"/></g><circle cx="290.800" cy="644.400" r="1.900" fill="none" stroke="#b8b8b8" stroke-width="1.100"/><path d="M290.800 639.600 v2 M290.800 647.200 v2 M286 644.400 h2 M293.600 644.400 h2 M287.400 641 l1.400 1.400 M292.800 646.400 l1.400 1.400 M287.400 647.800 l1.400-1.400 M292.800 642.400 l1.400-1.400" stroke="#b8b8b8" stroke-width="1"/><path d="M300.800 639.600 l9.900 9.100" stroke="#b8b8b8" stroke-width="1.700" stroke-dasharray="1.600 1.250" fill="none"/><path d="M329.800 641 v9 h9.500" stroke="#b8b8b8" stroke-width="0.900" fill="none"/><rect x="331" y="639" width="10.6" height="9.8" fill="#b8b8b8"/><path d="M332.4 639.6 v8.8 M340.20000000000005 639.6 v8.8" stroke="#1d1d1d" stroke-width="1.100" stroke-dasharray="1.300 1.300"/><rect x="334.2" y="643.3" width="4.199999999999999" height="1.200" fill="#1d1d1d"/><circle cx="349.600" cy="646.600" r="3.800" fill="#1d1d1d" stroke="#b8b8b8" stroke-width="0.900"/><circle cx="351.200" cy="645" r="3.800" fill="#1d1d1d" stroke="#b8b8b8" stroke-width="0.900"/><circle cx="353.400" cy="642.800" r="4.300" fill="#7a7a7a" stroke="#b8b8b8" stroke-width="0.900"/><circle cx="366" cy="644.700" r="4.600" fill="none" stroke="#b8b8b8" stroke-width="1.100"/><path d="M362.700 647.900 a4.600 4.600 0 0 0 6.500-6.500z" fill="#b8b8b8"/><path d="M381 640 l4.300 2.200 v4.800 l-4.300 2.400 l-4.300-2.400 v-4.800z M376.700 642.200 l4.300 2.200 l4.300-2.200 M381 644.400 v5" fill="none" stroke="#b8b8b8" stroke-width="1"/><path d="M7.7 662 c2.86-4.400 7.54-4.400 10.4 0 c-2.86 4.400-7.54 4.400-10.4 0z" fill="none" stroke="#e0e0e0" stroke-width="1.200"/><circle cx="12.9" cy="662" r="2.100" fill="#e0e0e0"/><path d="M75.300 658.300 l4.600 4.300 l-4.600 4.300" stroke="#c4c4c4" stroke-width="1.600" fill="none"/><g transform="translate(135.800 654.800)"><path d="M4.500 2.500 v-2 h11 v9 h-2" fill="none" stroke="#b8b8b8" stroke-width="1"/><path d="M2.500 4.500 v-2 h11 v9 h-2" fill="none" stroke="#b8b8b8" stroke-width="1"/><rect x="0.500" y="4.500" width="11" height="9" fill="#2a2a2a" stroke="#c8c8c8" stroke-width="1"/><path d="M1 13 v-2.500 l2.800-3 l2.400 2.600 l1.600-1.400 l3.200 3 v1.300z" fill="#3a8cf0"/></g><g transform="translate(269.7 656.4)"><path d="M1.800 6.400 v-1.600 c0-5.600 8.400-5.600 8.400 0 v1.600z" fill="#e8e8e8"/><path d="M3.200 5.200 v-.8 c0-.9 .8-1.700 2-2 v2.800z M8.800 5.200 v-.8 c0-.9 -.8-1.700 -2-2 v2.800z" fill="#111"/><path d="M0 7 h12" stroke="#e8e8e8" stroke-width="1.300"/><path d="M6 7 v2.200" stroke="#e8e8e8" stroke-width="1.500"/></g><path d="M301 666 l9.500-9" stroke="#d0d0d0" stroke-width="1.300"/><path d="M415.15 662.12 L415.16 661.93 L415.22 661.74 L415.34 661.55 L415.50 661.38 L415.71 661.24 L415.96 661.14 L416.25 661.09 L416.55 661.09 L416.86 661.16 L417.17 661.29 L417.45 661.48 L417.69 661.73 L417.88 662.04 L418.00 662.39 L418.04 662.76 L417.99 663.15 L417.85 663.54 L417.63 663.91 L417.31 664.23 L416.92 664.50 L416.47 664.70 L415.96 664.81 L415.43 664.83 L414.89 664.74 L414.36 664.55 L413.87 664.26 L413.45 663.88 L413.11 663.41 L412.87 662.88 L412.75 662.30 L412.76 661.69 L412.91 661.09 L413.19 660.51 L413.60 659.98 L414.12 659.53 L414.75 659.18 L415.46 658.94 L416.22 658.84 L417.00 658.88 L417.77 659.06 L418.50 659.39 L419.15 659.86 L419.70 660.45 L420.12 661.14 L420.39 661.90 L420.49 662.72 L420.41 663.55 L420.14 664.36 L419.70 665.12 L419.10 665.79 L418.34 666.35 L417.47 666.77 L416.51 667.02 L415.50 667.10 L414.48 666.98 L413.49 666.68 L412.57 666.19 L411.76 665.54 L411.10 664.74 L410.62 663.82" fill="none" stroke="#a4a4a4" stroke-width="1.150" stroke-linejoin="round"/><path d="M499.800 659.800 l4.500 4.300 l4.500-4.300" stroke="#e0e0e0" stroke-width="1.900" fill="none"/><path d="M546.500 655.500 h6.500 c-3.500 .3-5 1.800-5.200 5.500 h-1.300z" fill="#46524f"/><path d="M544.500 605 v8 h-2.500 a4 4 0 0 1 0-8z M544.500 634 v15.500 h-2.500 a4 4 0 0 1 -4-4 v-7.500 a4 4 0 0 1 4-4z" fill="#3a92f0"/><path d="M545.5 627 v6" stroke="#a0a0a0" stroke-width="1.100"/><path d="M611.1 628.5 v4.5" stroke="#a0a0a0" stroke-width="1.100"/><path d="M676.7 628.5 v4.5" stroke="#a0a0a0" stroke-width="1.100"/><path d="M742.3 628.5 v4.5" stroke="#a0a0a0" stroke-width="1.100"/><path d="M807.9 628.5 v4.5" stroke="#a0a0a0" stroke-width="1.100"/><path d="M873.5 628.5 v4.5" stroke="#a0a0a0" stroke-width="1.100"/><path d="M939.1 628.5 v4.5" stroke="#a0a0a0" stroke-width="1.100"/><path d="M874.800 619.200 h11.200 v5.400 l-5.600 7.800 l-5.600-7.800z" fill="#3a92f0"/><path d="M879 625.300 h2.600 M880.300 625.300 v6.500" stroke="#14233a" stroke-width="0.900" fill="none"/></svg>
</section>
</div></body></html>
